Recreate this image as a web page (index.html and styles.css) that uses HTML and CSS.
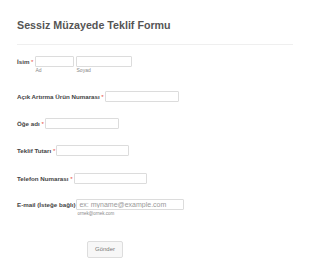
FILE: index.html
```html
<!DOCTYPE html>
<html lang="tr">
<head>
<meta charset="UTF-8">
<meta name="viewport" content="width=device-width, initial-scale=1.0">
<title>Sessiz Müzayede Teklif Formu</title>
<link rel="stylesheet" href="styles.css">
</head>
<body>
<div class="form">
    <h1 class="title">Sessiz Müzayede Teklif Formu</h1>
    <hr class="divider">

    <div class="field field-name">
        <label class="label">İsim <span class="req">*</span></label>
        <div class="name-parts">
            <div class="part">
                <input type="text" class="input input-first">
                <span class="sub">Ad</span>
            </div>
            <div class="part">
                <input type="text" class="input input-last">
                <span class="sub">Soyad</span>
            </div>
        </div>
    </div>

    <div class="field field-lot">
        <label class="label">Açık Artırma Ürün Numarası <span class="req">*</span></label>
        <input type="text" class="input input-md">
    </div>

    <div class="field field-item">
        <label class="label">Öğe adı <span class="req">*</span></label>
        <input type="text" class="input input-md">
    </div>

    <div class="field field-bid">
        <label class="label">Teklif Tutarı <span class="req">*</span></label>
        <input type="text" class="input input-sm">
    </div>

    <div class="field field-phone">
        <label class="label">Telefon Numarası <span class="req">*</span></label>
        <input type="text" class="input input-sm">
    </div>

    <div class="field field-email">
        <label class="label">E-mail (İsteğe bağlı)</label>
        <div class="part">
            <input type="email" class="input input-lg" placeholder="ex: myname@example.com">
            <span class="sub hint">ornek@ornek.com</span>
        </div>
    </div>

    <div class="actions">
        <button type="submit" class="submit">Gönder</button>
    </div>
</div>
</body>
</html>
```

FILE: styles.css
```css
body {
    margin: 0;
    background: #fff;
    font-family: "Liberation Sans", Arial, sans-serif;
}
.form {
    padding: 18px 17px 0;
}
.title {
    margin: 0;
    font-size: 10.7px;
    line-height: 14px;
    font-weight: bold;
    color: #555;
}
.divider {
    margin: 12px 0 0;
    border: 0;
    border-top: 1px solid #efefef;
}
.field {
    display: flex;
    align-items: flex-start;
}
.label {
    font-size: 6.2px;
    line-height: 11px;
    font-weight: bold;
    color: #444;
    white-space: nowrap;
    margin-right: 1px;
}
.req {
    color: #e74c3c;
    font-weight: normal;
}
.field-name { margin-top: 11px; }
.field-lot { margin-top: 17px; }
.field-item { margin-top: 16px; }
.field-bid { margin-top: 16px; }
.field-phone { margin-top: 17px; }
.field-email { margin-top: 15px; }

.name-parts {
    display: flex;
    gap: 2px;
}
.part {
    display: flex;
    flex-direction: column;
}
.input {
    box-sizing: border-box;
    height: 11px;
    margin: 0;
    padding: 0 2px;
    border: 1px solid #dcdcdc;
    border-radius: 1px;
    background: #fff;
    font-family: "Liberation Sans", Arial, sans-serif;
    font-size: 7px;
    color: #555;
}
.input::placeholder {
    color: #999;
}
.input-first { width: 39px; }
.input-last { width: 56px; }
.input-md { width: 74px; }
.input-sm { width: 73px; }
.input-lg { width: 108px; }
.sub {
    font-size: 5px;
    line-height: 7px;
    color: #888;
    padding-left: 1px;
}
.hint {
    padding-left: 1px;
    font-size: 4.5px;
}
.actions {
    margin-top: 20px;
    padding-left: 70px;
}
.submit {
    width: 36px;
    height: 17px;
    padding: 0;
    border: 1px solid #ddd;
    border-radius: 2px;
    background: #f7f7f7;
    color: #777;
    font-family: "Liberation Sans", Arial, sans-serif;
    font-size: 6px;
    cursor: pointer;
}
```
